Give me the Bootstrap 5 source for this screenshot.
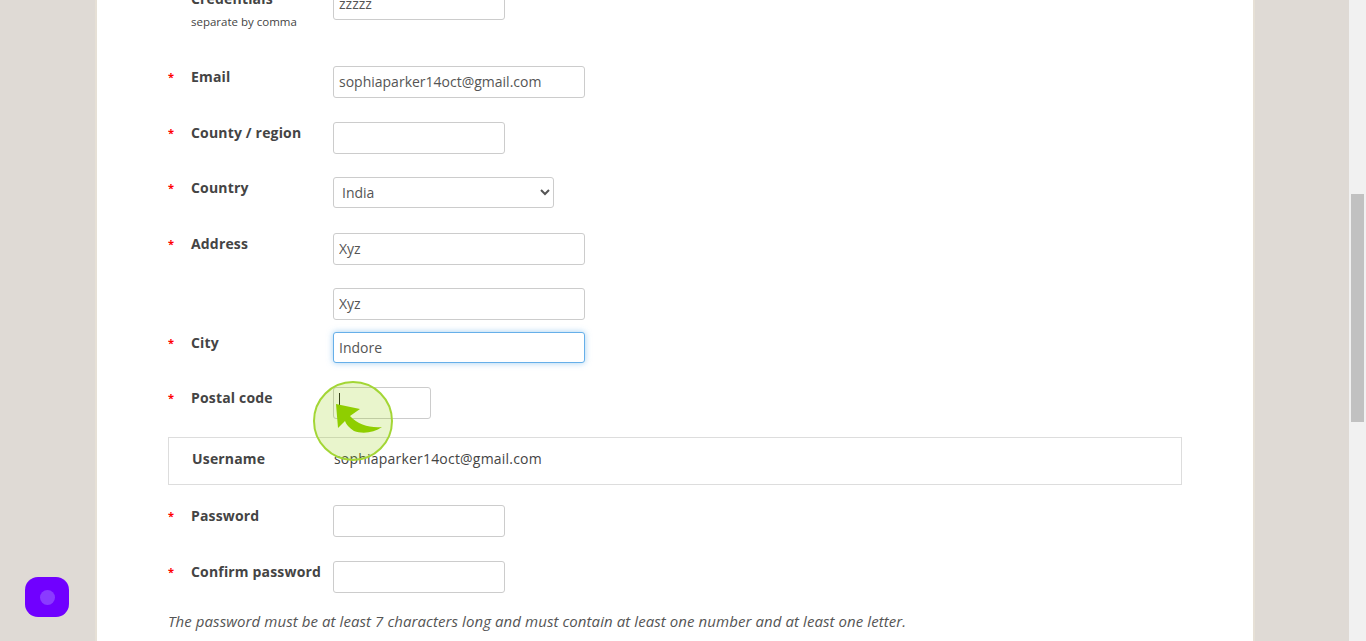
<!DOCTYPE html>
<html lang="en">
<head>
<meta charset="utf-8">
<title>Signup</title>
<link href="https://cdn.jsdelivr.net/npm/bootstrap@5.3.0/dist/css/bootstrap.min.css" rel="stylesheet">
<style>
html,body{height:641px;overflow:hidden;margin:0}
body{background:#dfdad5;font-family:"Open Sans","Liberation Sans",sans-serif;font-size:14px;color:#444}
.stage{height:641px}
.gutter{width:95px;flex:none}
.gutter-r{width:94px;flex:none}
.sheet{width:1160px;flex:none;height:641px;overflow:hidden;background:#fff;border-left:2px solid #e6e0d6;border-right:2px solid #e6e0d6;padding:0 70px 0 71px}
.bar-track{width:17px;margin-left:auto;background:#f1f1f1;flex:none;padding:194px 2px 0}
.bar-thumb{height:228px;background:#c1c1c1}
.frow{display:flex;align-items:flex-start}
.req{width:23px;flex:none;color:#f00;font-size:11px;font-weight:700;line-height:20px;padding-top:1px}
.lbl{width:142px;flex:none;font-weight:700;letter-spacing:.17px;line-height:20px;padding-top:1px;color:#444}
.hint{display:block;font-weight:400;font-size:11.5px;letter-spacing:0;line-height:20px;margin-top:3px;color:#444}
.fld{height:32px;border:1px solid #ccc;border-radius:3px;background:#fff;padding:0 5px 1px;font:14px "Open Sans",sans-serif;color:#555;outline:0;display:block}
.w-s{width:172px}.w-l{width:252px}.w-xs{width:98px}
.sel{width:221px;height:31px;padding:0 0 0 4px}
.focus{height:31px;border-color:#66afe9;box-shadow:0 0 6px rgba(102,175,233,.6)}
.caret{width:1px;height:13px;background:#222;margin:5px 0 0}
.post{padding-top:0}
.userbox{border:1px solid #ddd;height:48px;display:flex;align-items:center;padding:0 0 5px 23px;margin-bottom:20px;width:1014px}
.userbox b{width:142px;flex:none;letter-spacing:.17px;color:#444}
.userbox span{letter-spacing:.2px;color:#444}
.note{font-style:italic;font-size:15px;color:#555;margin-top:17px;letter-spacing:.08px;white-space:nowrap}
.m-a{margin-top:-12px;margin-bottom:34px}
.m24{margin-bottom:24px}.m23{margin-bottom:23px}.m25{margin-bottom:25px}.m12{margin-bottom:12px}.m18{margin-bottom:18px}.m0{margin-bottom:0}
.spot{position:absolute;left:312px;top:380px;pointer-events:none}
.launcher{position:fixed;left:25px;top:577px;width:44px;height:40px;border-radius:13px;background:#7000ff}
.launcher span{position:absolute;left:14.5px;top:12.5px;width:15px;height:15px;border-radius:50%;background:#8a3bff}
</style>
</head>
<body>
<div class="stage d-flex">
  <div class="gutter"></div>
  <main class="sheet">
    <form>
      <div class="frow m-a"><div class="req"></div><div class="lbl">Credentials<span class="hint">separate by comma</span></div><input class="fld w-s" value="zzzzz"></div>
      <div class="frow m24"><div class="req">*</div><div class="lbl">Email</div><input class="fld w-l" value="sophiaparker14oct@gmail.com"></div>
      <div class="frow m23"><div class="req">*</div><div class="lbl">County / region</div><input class="fld w-s"></div>
      <div class="frow m25"><div class="req">*</div><div class="lbl">Country</div><select class="fld sel"><option>India</option></select></div>
      <div class="frow m23"><div class="req">*</div><div class="lbl">Address</div><input class="fld w-l" value="Xyz"></div>
      <div class="frow m12"><div class="req"></div><div class="lbl"></div><input class="fld w-l" value="Xyz"></div>
      <div class="frow m24"><div class="req">*</div><div class="lbl">City</div><input class="fld w-l focus" value="Indore"></div>
      <div class="frow m18"><div class="req">*</div><div class="lbl">Postal code</div><div class="fld w-xs post"><div class="caret"></div></div></div>
      <div class="userbox"><b>Username</b><span>sophiaparker14oct@gmail.com</span></div>
      <div class="frow m24"><div class="req">*</div><div class="lbl">Password</div><input class="fld w-s" type="password"></div>
      <div class="frow m0"><div class="req">*</div><div class="lbl">Confirm password</div><input class="fld w-s" type="password"></div>
      <p class="note">The password must be at least 7 characters long and must contain at least one number and at least one letter.</p>
    </form>
  </main>
  <div class="gutter-r"></div>
  <div class="bar-track"><div class="bar-thumb"></div></div>
</div>
<svg class="spot" width="82" height="82" viewBox="312 380 82 82" aria-hidden="true">
  <circle cx="353" cy="421" r="39" fill="#8fce00" fill-opacity=".2" stroke="#a3d635" stroke-width="2"/>
  <path d="M336 404L360 409L350 416C358 425 370 428 382 427C374 433 362 434 354 431C349 428 346 424 345 421L338 428Z" fill="#8fce00"/>
</svg>
<div class="launcher"><span></span></div>
<script src="https://cdn.jsdelivr.net/npm/bootstrap@5.3.0/dist/js/bootstrap.bundle.min.js"></script>
</body>
</html>
